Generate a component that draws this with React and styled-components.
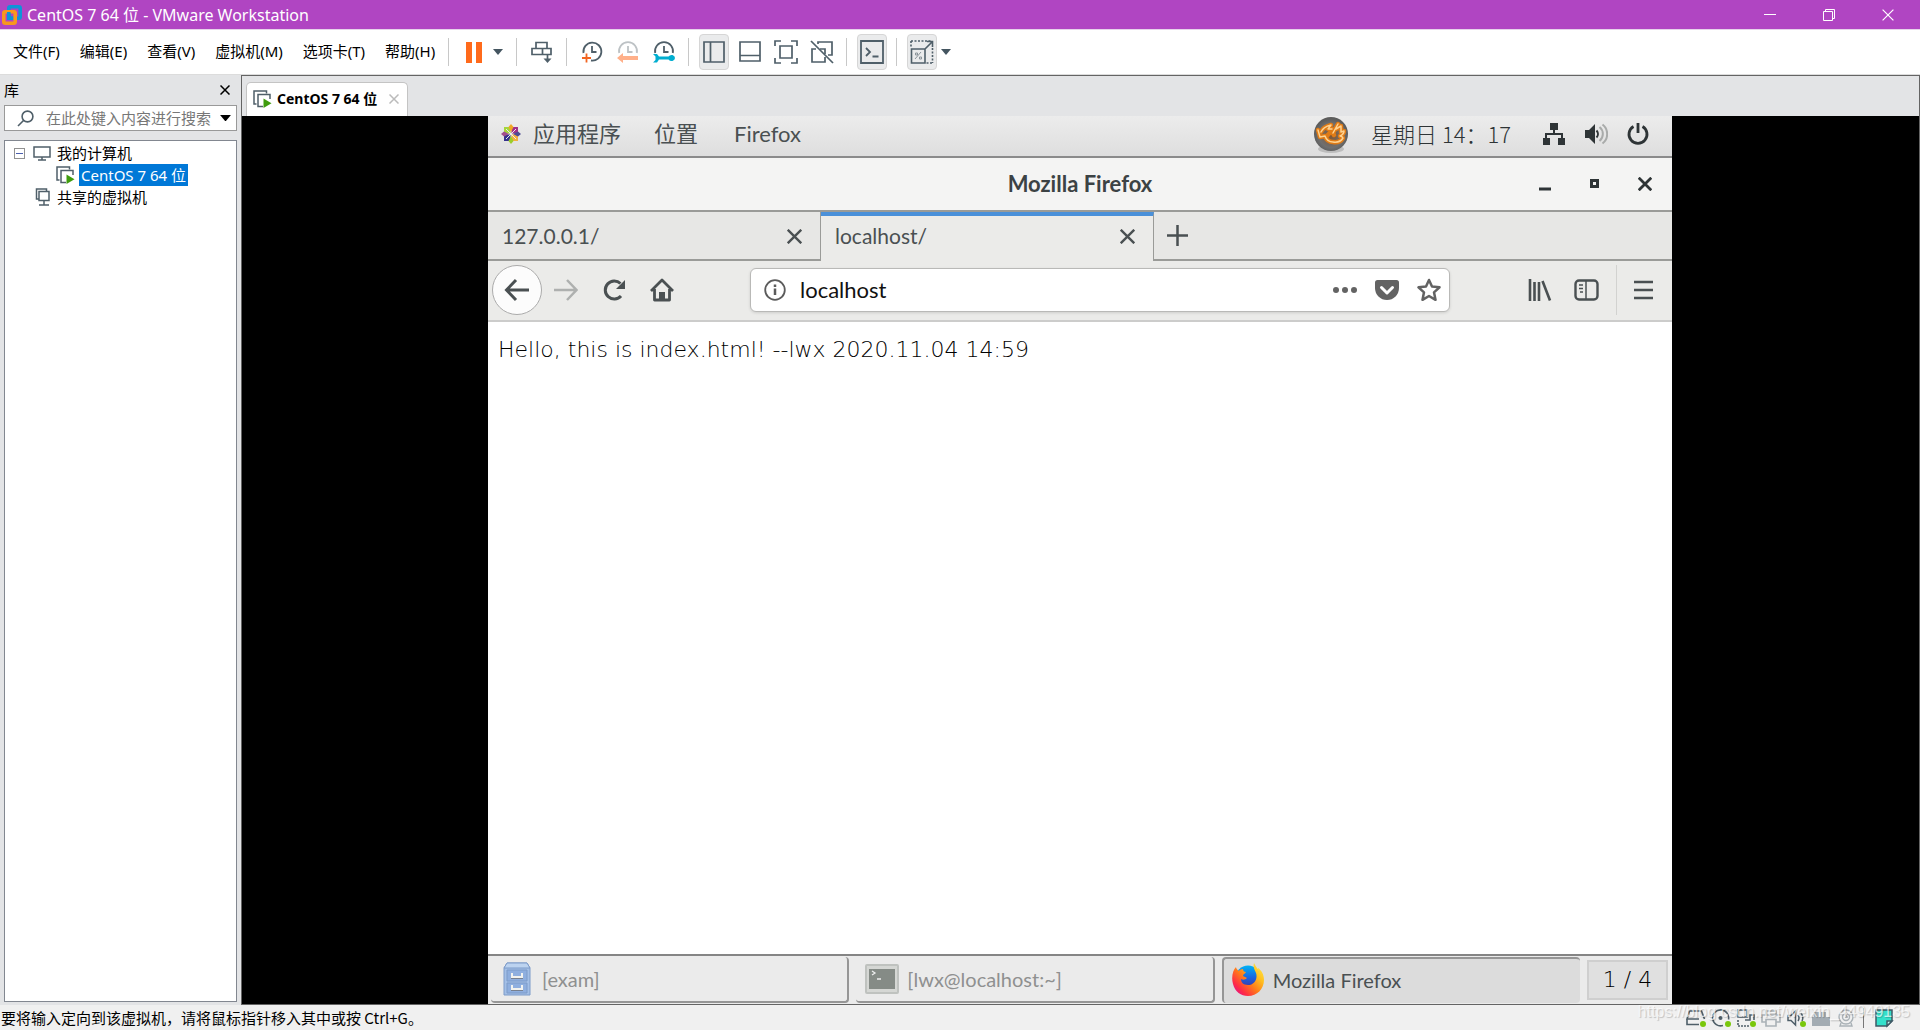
import React from 'react'
import styled, { createGlobalStyle, css } from 'styled-components'

const slate = '#4f5f69'
const guestInk = '#4a5052'
const guestDark = '#2e3436'
const guestLine = '#9a9b98'

const hostFont = '"Noto Sans", "Noto Sans CJK SC", sans-serif'
const guestFont = 'Lato, "Noto Sans CJK SC", sans-serif'
const thinFont = '"DejaVu Sans", "DejaVu Sans Light", "Noto Sans CJK SC", sans-serif'

const GlobalStyle = createGlobalStyle`
    * { box-sizing: border-box; }
    body { margin: 0; background: #e3e4e6; overflow: hidden; }
    button, input {
        font: inherit;
        color: inherit;
        border: 0;
        padding: 0;
        margin: 0;
        background: none;
        outline: none;
        line-height: inherit;
    }
    svg { display: block; flex: none; }
`

const Window = styled.div`
    display: flex;
    flex-direction: column;
    height: 100vh;
    font: 15px/22px ${hostFont};
    color: #000;
`

const IconButton = styled.button`
    display: flex;
    align-items: center;
    justify-content: center;
    flex: none;
`

/* ---------- host title bar ---------- */

const TitleBar = styled.header`
    display: flex;
    align-items: center;
    height: 30px;
    flex: none;
    padding: 0 3px 0 2px;
    gap: 5px;
    background: #b045c2;
    border-bottom: 1px solid #e6d3ea;
    color: #fff;
`

const WindowTitle = styled.h1`
    flex: 1;
    margin: 0;
    font-size: 16px;
    font-weight: 400;
    line-height: 28px;
`

const CaptionButtons = styled.div`
    display: flex;
`

const CaptionButton = styled(IconButton)`
    width: 59px;
    height: 28px;
`

/* ---------- menu and tool bar ---------- */

const MenuBar = styled.div`
    display: flex;
    align-items: center;
    height: 45px;
    flex: none;
    padding-left: 3px;
    background: #fff;
    border-bottom: 1px solid #dcdcdc;
`

const Menus = styled.nav`
    display: flex;
    padding-bottom: 3px;
`

const MenuItem = styled.button`
    padding: 0 10px;
    font-size: 15px;
    white-space: nowrap;
`

const Tools = styled.div`
    display: flex;
    align-items: center;
    gap: 6px;
`

const Separator = styled.span`
    width: 1px;
    height: 28px;
    margin: 0 4px 0 3px;
    background: #c8c8c8;
`

const Split = styled.div`
    display: flex;
`

const Tool = styled(IconButton)`
    width: 30px;
    height: 36px;
    border-radius: 4px;
    ${({ $pressed }) => $pressed && css`
        background: #eaebec;
        border: 1px solid #d6d6d6;
    `}
`

const CaretTool = styled(IconButton)`
    width: 18px;
    height: 36px;
`

/* ---------- library panel ---------- */

const Body = styled.div`
    display: flex;
    flex: 1;
    min-height: 0;
`

const Library = styled.aside`
    display: flex;
    flex-direction: column;
    width: 241px;
    flex: none;
    padding: 0 4px 3px;
    font-family: "Noto Sans CJK SC", sans-serif;
`

const LibraryHeader = styled.div`
    display: flex;
    justify-content: space-between;
    align-items: center;
    height: 30px;
    padding-right: 7px;
`

const LibraryTitle = styled.h2`
    margin: 0;
    font-size: 15px;
    font-weight: 400;
`

const SearchBox = styled.label`
    display: flex;
    align-items: center;
    height: 26px;
    padding: 0 5px 0 12px;
    gap: 8px;
    background: #fff;
    border: 1px solid #999;
`

const SearchInput = styled.input`
    flex: 1;
    min-width: 0;
    padding-left: 4px;
    font-size: 15px;
    &::placeholder { color: #777; opacity: 1; }
`

const Tree = styled.ul`
    flex: 1;
    margin: 0;
    margin-top: 9px;
    padding: 1px 0;
    list-style: none;
    background: #fff;
    border: 1px solid #828790;
`

const TreeRow = styled.li`
    display: flex;
    align-items: center;
    height: 22px;
    gap: 4px;
    padding-left: ${({ $indent }) => $indent}px;
`

const TreeLabel = styled.span`
    padding: 0 2px;
    ${({ $selected }) => $selected && css`
        font-family: ${hostFont};
        background: #0078d7;
        color: #fff;
    `}
`

const Expander = styled(IconButton)`
    width: 11px;
    height: 11px;
    margin-right: 4px;
    border: 1px solid #919191;
`

/* ---------- virtual machine area ---------- */

const Workspace = styled.main`
    display: flex;
    flex-direction: column;
    flex: 1;
    min-width: 0;
    border: 1px solid #646464;
`

const VmTabs = styled.div`
    display: flex;
    align-items: flex-end;
    height: 40px;
    flex: none;
    padding-left: 4px;
`

const VmTab = styled.div`
    display: flex;
    align-items: center;
    height: 34px;
    padding: 0 8px 2px 6px;
    background: #fff;
    border: 1px solid #c4c4c4;
    border-bottom: 0;
    border-radius: 5px 5px 0 0;
`

const VmTabLabel = styled.button`
    display: flex;
    align-items: center;
    gap: 5px;
    margin-right: 12px;
    font-size: 14px;
    font-weight: 700;
    white-space: nowrap;
`

const Stage = styled.div`
    display: flex;
    justify-content: center;
    flex: 1;
    min-height: 0;
    padding-left: 2px;
    padding-right: 3px;
    background: #000;
`

const Guest = styled.div`
    display: flex;
    flex-direction: column;
    height: 100%;
    aspect-ratio: 4 / 3;
    background: #fff;
    font: 22px/26px ${guestFont};
    color: ${guestInk};
`

const TopPanel = styled.div`
    display: flex;
    align-items: center;
    height: 42px;
    flex: none;
    padding: 0 22px 4px 13px;
    background: linear-gradient(#ececec, #dedede);
    border-bottom: 2px solid #8b8b8b;
    color: ${guestDark};
`

const PanelMenu = styled.button`
    display: flex;
    align-items: center;
    gap: 12px;
    margin-right: ${({ $gap }) => $gap}px;
    color: ${guestInk};
`

const PanelStatus = styled.div`
    display: flex;
    align-items: center;
    gap: 18px;
    margin-left: auto;
`

const Clock = styled.time`
    margin-left: 4px;
    margin-right: 13px;
    padding-bottom: 2px;
    font-family: "Noto Sans CJK SC", sans-serif;
    font-weight: 300;
    white-space: nowrap;
`

const GuestTitleBar = styled.div`
    display: grid;
    grid-template-columns: 1fr auto 1fr;
    align-items: center;
    height: 54px;
    flex: none;
    padding: 0 20px;
    background: #f4f4f3;
    border-bottom: 2px solid ${guestLine};
`

const GuestTitle = styled.h2`
    grid-column: 2;
    margin: 0;
    font-size: 22px;
    font-weight: 700;
    color: #3c4244;
`

const GuestCaption = styled.div`
    display: flex;
    justify-content: flex-end;
    gap: 36px;
    color: ${guestDark};
`

const BrowserTabs = styled.div`
    display: flex;
    height: 49px;
    flex: none;
    background: #e7e7e5;
    font-size: 21px;
`

const BrowserTab = styled.div`
    display: flex;
    align-items: center;
    justify-content: space-between;
    flex: 0 1 333px;
    padding: 1px 18px 0 14px;
    border: solid ${guestLine};
    border-width: 0 1px 2px 0;
    ${({ $active }) => $active && css`
        background: #ebebe9;
        border-top: 4px solid #4a90d9;
        border-bottom: 0;
        padding-top: 0;
        padding-bottom: 5px;
    `}
`

const NewTab = styled.div`
    display: flex;
    align-items: center;
    flex: 1;
    padding-left: 13px;
    border-bottom: 2px solid ${guestLine};
`

const NavBar = styled.div`
    display: flex;
    align-items: center;
    height: 61px;
    flex: none;
    padding: 0 19px 1px 4px;
    background: #ebebe9;
    border-bottom: 2px solid #cccccb;
`

const NavGroup = styled.div`
    display: flex;
    align-items: center;
    gap: ${({ $gap }) => $gap || 24}px;
`

const BackButton = styled(IconButton)`
    width: 50px;
    height: 50px;
    margin-right: -12px;
    background: #fcfcfc;
    border: 1px solid #ababab;
    border-radius: 50%;
`

const AddressBar = styled.label`
    display: flex;
    align-items: center;
    flex: 1;
    height: 44px;
    margin: 0 78px 0 76px;
    padding: 0 8px 0 13px;
    gap: 14px;
    background: #fff;
    border: 1px solid #b9b9b7;
    border-radius: 6px;
    box-shadow: 0 1px 3px rgba(0, 0, 0, 0.12);
`

const AddressInput = styled.input`
    flex: 1;
    min-width: 0;
    color: #111;
`

const NavDivider = styled.span`
    width: 1px;
    height: 50px;
    background: #d2d2d0;
`

const Page = styled.article`
    flex: 1;
    min-height: 0;
    padding: 14px 10px;
    font-family: ${thinFont};
    font-weight: 200;
    line-height: 28px;
    color: #000;
`

const PageText = styled.p`
    margin: 0;
`

const TaskBar = styled.div`
    display: flex;
    align-items: stretch;
    height: 50px;
    flex: none;
    gap: 7px;
    padding: 1px 4px 1px 3px;
    background: #ebebeb;
    border-top: 2px solid #858585;
`

const Task = styled.button`
    display: flex;
    align-items: center;
    flex: 1;
    gap: 8px;
    padding: 0 9px;
    font-size: 20px;
    border: solid #969696;
    border-width: 0 2px 2px 0;
    border-radius: 4px;
    color: #8f9090;
    ${({ $active }) => $active && css`
        background: #dcdcdc;
        border-width: 2px 0 0 2px;
        padding: 0 11px 3px 7px;
        color: ${guestInk};
    `}
`

const TaskIcon = styled.span`
    display: flex;
    justify-content: center;
    width: 34px;
`

const Workspaces = styled.button`
    align-self: center;
    width: 81px;
    height: 40px;
    background: #e0e0e0;
    border: 2px solid #cfcfcf;
    font-family: ${thinFont};
    font-weight: 200;
    color: #000;
`

/* ---------- host status bar ---------- */

const StatusBar = styled.footer`
    position: relative;
    display: flex;
    align-items: center;
    justify-content: space-between;
    height: 25px;
    flex: none;
    padding: 0 26px 0 1px;
    background: #f0f0f0;
    font-family: "Noto Sans CJK SC", sans-serif;
`

const Devices = styled.div`
    display: flex;
    align-items: center;
    gap: 5px;
`

const StatusDivider = styled.span`
    width: 1px;
    height: 20px;
    margin: 0 5px 0 2px;
    background: #777;
`

const Watermark = styled.span`
    position: absolute;
    right: 10px;
    bottom: 8px;
    font: 16px/20px "Liberation Sans", sans-serif;
    color: rgba(255, 255, 255, 0.7);
    text-shadow: 1px 1px 1px rgba(0, 0, 0, 0.2);
    pointer-events: none;
`

/* ---------- drawings ---------- */

const Icon = ({ w = 22, h = w, box, color = slate, sw = 2, children }) => (
  <svg width={w} height={h} viewBox={box || `0 0 ${w} ${h}`} fill="none" stroke={color} strokeWidth={sw} aria-hidden="true">
    {children}
  </svg>
)

const Caret = ({ w = 10, color = '#445560' }) => (
  <svg width={w} height={w / 2 + 1} viewBox="0 0 10 6" aria-hidden="true"><path d="M0 0h10L5 6z" fill={color} /></svg>
)

const Cross = ({ size = 10, sw = 1, color = 'currentColor' }) => (
  <Icon w={size} box="0 0 10 10" sw={sw} color={color}><path d="M.5.5l9 9M9.5.5l-9 9" /></Icon>
)

const VmwareLogo = () => (
  <Icon w={20} sw={3.6} color="none">
    <rect x="6.8" y="1.8" width="11.4" height="11.4" rx="1.5" stroke="#0d95d8" />
    <rect x="1.8" y="6.8" width="11.4" height="11.4" rx="1.5" stroke="#f8981d" />
    <path d="M6.8 7V13.2H11" stroke="#0d95d8" />
  </Icon>
)

const VmIcon = () => (
  <Icon w={19} h={18} sw={1.5}>
    <path d="M3.5 14H1V1H13.5V3.5" />
    <path d="M10 16.5H5V4.5H17V9" />
    <path d="M10.5 8.5l8 4.8-8 4.7z" fill="#3f9c0d" stroke="none" />
  </Icon>
)

const MonitorIcon = () => (
  <Icon w={18} h={15} sw={1.5}><path d="M1 1h16v10H1zM9 11v3M5 14h8" /></Icon>
)

const SharedIcon = () => (
  <Icon w={16} h={18} sw={1.5}><path d="M3.500 11H1.500V1h10v2M4 3.500h10v9H4zM9 12.500v4M4 17h10" /></Icon>
)

const SearchIcon = () => (
  <Icon w={17} sw={1.6}><circle cx="10.500" cy="6.500" r="5.400" /><path d="M6.500 10.500L1 16" /></Icon>
)

const PauseIcon = () => (
  <svg width="17" height="21" aria-hidden="true"><path d="M0 0h6v21H0zM10 0h6v21h-6z" fill="#ff6a1b" /></svg>
)

const SendIcon = () => (
  <Icon w={22} sw={1.7}>
    <path d="M5 7V1.500h11V7M1 7.500h19v6H1zM11.500 7.500v6M16.500 13.500v6" />
    <path d="M12.500 17.500h8l-4 4.500z" fill={slate} stroke="none" />
  </Icon>
)

const ClockFace = ({ light }) => (
  <g stroke={light ? '#bdc2c5' : slate}>
    <path d="M2.200 12A9 9 0 1 1 19.800 12" strokeWidth="1.800" />
    <path d="M11 5v6h4.500" strokeWidth="1.800" />
  </g>
)

const SnapshotIcon = () => (
  <Icon w={22} sw={1.8}>
    <path d="M2.500 12A9 9 0 1 1 10 19.500M11 5v6h4.500" />
    <path d="M5.500 12.500v9M1 17h9" stroke="#f26522" />
  </Icon>
)

const RevertIcon = () => (
  <Icon w={22} sw={1.8}>
    <ClockFace light />
    <path d="M0 17l6-5v3h15v4H6v3z" fill="#ffb08a" stroke="none" />
  </Icon>
)

// wrench laid under the clock: open jaw on the left, closed ring on the right
const ManageIcon = () => (
  <Icon w={22} sw={1.8}>
    <ClockFace />
    <path d="M0 13h4l2 2.500h9.500Q17 13.500 19.500 14q2.500 1 2.500 3t-2.500 3q-2.500.5-4-1.500H6L4 21.500H0L2.500 19v-3.500z" fill="#00aed0" stroke="none" />
  </Icon>
)

const SideIcon = () => <Icon w={22} sw={1.7}><path d="M1 1h20v20H1zM7.500 1v20" /></Icon>
const BottomIcon = () => <Icon w={22} sw={1.7}><path d="M1 1h20v19H1zM1 14.500h20" /></Icon>
const FullscreenIcon = () => (
  <Icon w={24} sw={1.7}><path d="M1 6V1h6M17 1h6v5M23 18v5h-6M7 23H1v-5M6 6h12v12H6z" /></Icon>
)
const UnityIcon = () => (
  <Icon w={24} sw={1.7}>
    <path d="M8 4V2h14v13h-4M6 9H2v13h13v-5M10 9h5v5" />
    <path d="M1 1l22 22" />
  </Icon>
)
const ConsoleIcon = () => (
  <Icon w={24} sw={1.8}><path d="M1 1h22v22H1zM6 8l4 4-4 4M12.500 16.500h6" /></Icon>
)
const StretchIcon = () => (
  <Icon w={24} sw={1.6}>
    <path d="M1 1h21M22.500 8v15M22 23h-6M1 1v7" strokeDasharray="2 1.500" />
    <path d="M1.500 9H15v14H1.500zM15 9l7-7M17 1.500h5.500V7" />
    <path d="M5 19l6-7M5.500 13h2v2h-2zM9.500 17h2v2h-2z" strokeWidth="1" stroke="#8b949a" />
  </Icon>
)

const CentosIcon = () => (
  <svg width="20" height="20" viewBox="0 0 20 20" aria-hidden="true">
    <path d="M3 3h6.500v6.500H3z" fill="#a5d63c" />
    <path d="M10.500 3H17v6.500h-6.500z" fill="#a0308a" />
    <path d="M3 10.500h6.500V17H3z" fill="#35328c" />
    <path d="M10.500 10.500H17V17h-6.500z" fill="#f2b040" />
    <path d="M10 0l2.500 3-2.500 5-2.500-5z" fill="#efa724" />
    <path d="M20 10l-3 2.500-5-2.500 5-2.500z" fill="#4d4a94" />
    <path d="M10 20l-2.500-3 2.500-5 2.500 5z" fill="#9ccd2a" />
    <path d="M0 10l3-2.500 5 2.500-5 2.500z" fill="#a14f8c" />
    <path d="M5 5l10 10M15 5L5 15" stroke="#ececec" strokeWidth="1" />
  </svg>
)

const InputMethodIcon = () => (
  <svg width="36" height="38" viewBox="0 0 36 38" aria-hidden="true">
    <defs>
      <radialGradient id="orb" cx="50%" cy="55%">
        <stop offset="0" stopColor="#83552f" />
        <stop offset=".7" stopColor="#707070" />
        <stop offset="1" stopColor="#5c5c5c" />
      </radialGradient>
    </defs>
    <ellipse cx="18" cy="34" rx="13" ry="4" fill="#bdbdbd" />
    <circle cx="18" cy="19" r="17" fill="url(#orb)" />
    <g fill="none" strokeLinejoin="round" strokeLinecap="round">
      <path d="M5 15l2 7 5-1q2 6 8 6 7 1 10-4-1-2-3-2 4-2 4-5l-3 1V11l-5 3M8 17q2-5 10-7l-3 4h4M14 21q4-6 7-1M25 9l-5 9" stroke="#e07b16" strokeWidth="4.500" />
      <path d="M5 15l2 7 5-1q2 6 8 6 7 1 10-4-1-2-3-2 4-2 4-5l-3 1V11l-5 3M8 17q2-5 10-7l-3 4h4M25 9l-5 9" stroke="#ffd391" strokeWidth="1.500" />
    </g>
  </svg>
)

const NetworkIcon = () => (
  <svg width="24" height="24" viewBox="0 0 24 24" fill={guestDark} aria-hidden="true">
    <path d="M8 1h8v7H8zM1 16h7v7H1zM16 16h7v7h-7zM11 8h2v3h8v5h-2v-3H5v3H3v-5h8z" />
  </svg>
)

const VolumeIcon = () => (
  <Icon w={24} sw={2} color={guestDark}>
    <path d="M1 8h4l6-6v20l-6-6H1z" fill={guestDark} stroke="none" />
    <path d="M12.500 8.500a5 5 0 0 1 0 7" />
    <path d="M15.500 5a9 9 0 0 1 0 14M18.500 2.500a12 12 0 0 1 0 19" stroke="#a9abaa" />
  </Icon>
)

const PowerIcon = () => (
  <Icon w={24} sw={2.800} color={guestDark}><path d="M7.500 4.500a9 9 0 1 0 9 0M12 1v10" /></Icon>
)

const BackIcon = () => <Icon w={26} sw={3} color={guestInk}><path d="M25 13H3M12 3L2.500 13l9.500 10" /></Icon>
const ForwardIcon = () => <Icon w={24} sw={2.500} color="#aeb0af"><path d="M0 12h22M13 2l9.500 10L13 22" /></Icon>
const ReloadIcon = () => (
  <Icon w={24} sw={3} color={guestInk}>
    <path d="M19 18a9 9 0 1 1-.5-12.500" />
    <path d="M23 2v9h-9z" fill={guestInk} stroke="none" />
  </Icon>
)
const HomeIcon = () => (
  <Icon w={24} sw={2.800} color={guestInk}>
    <path d="M1 13L12 2l11 11M4.500 11v11h15V11" strokeLinejoin="round" />
    <path d="M9 14h6v8H9z" fill={guestInk} stroke="none" />
  </Icon>
)
const InfoIcon = () => (
  <Icon w={22} sw={1.800} color="#5b5b5b">
    <circle cx="11" cy="11" r="9.800" />
    <path d="M11 9.500V16M11 5.500v2.500" strokeWidth="2.500" />
  </Icon>
)
const DotsIcon = () => (
  <svg width="24" height="8" fill="#636363" aria-hidden="true"><circle cx="3" cy="4" r="3" /><circle cx="12" cy="4" r="3" /><circle cx="21" cy="4" r="3" /></svg>
)
const PocketIcon = () => (
  <Icon w={24} h={22} sw={3} color="#fff">
    <path d="M2.500 1h19q2.500 0 2.500 2.500V9a12 12 0 0 1-24 0V3.500Q0 1 2.500 1z" fill="#636363" stroke="none" />
    <path d="M6.500 8.500l5.500 5.500 5.500-5.500" strokeLinecap="round" strokeLinejoin="round" />
  </Icon>
)
const StarIcon = () => (
  <Icon w={24} sw={2.500} color="#636363">
    <path d="M12 2l3 6.500 7.500.8-5.500 5 1.500 7.500L12 18l-6.500 3.800L7 14.300l-5.500-5L9 8.500z" strokeLinejoin="round" />
  </Icon>
)
const LibraryIcon = () => (
  <Icon w={24} h={22} sw={2.600} color={guestInk}><path d="M2 0v22M6.500 3v19M11 3v19M14.500 2l7.500 19.500" /></Icon>
)
const SidebarIcon = () => (
  <Icon w={25} h={22} sw={2.400} color={guestInk}>
    <rect x="1.500" y="1.500" width="22" height="19" rx="3.500" />
    <path d="M12 1v20" strokeWidth="1.500" />
    <path d="M5 6h4M5 9.500h4M6 13h3" strokeWidth="1.500" />
  </Icon>
)
const MenuIcon = () => <Icon w={19} h={20} sw={2.600} color={guestInk}><path d="M0 2h19M0 10h19M0 18h19" /></Icon>

const CabinetIcon = () => (
  <Icon w={28} h={34} sw={1} color="#7d9bc9">
    <path d="M4 1h20l3 5v27H1V6z" fill="#a3bfe6" />
    <path d="M1 6h26L24 1H4z" fill="#bcd3f0" />
    <path d="M4 8h20v11H4zM4 21h20v10H4z" fill="#8fafdf" />
    <path d="M9 11v4h10v-4M9 23v4h10v-4" stroke="#f2f2ee" strokeWidth="2" />
    <path d="M8 16.500h12M8 28.500h12" stroke="#77808f" />
  </Icon>
)
const TerminalIcon = () => (
  <Icon w={34} h={30} sw={2} color="#bfc2bf">
    <rect x="1" y="1" width="32" height="28" rx="1" fill="#d5d7d4" />
    <path d="M4 5h26v20H4z" fill="#858b86" stroke="none" />
    <path d="M7 7l3 2-3 2M12 15h4" stroke="#eee" strokeWidth="1.300" />
  </Icon>
)
const FirefoxIcon = () => (
  <svg width="32" height="34" viewBox="0 0 32 34" aria-hidden="true">
    <defs>
      <linearGradient id="fox" x1="1" y1="0" x2="0.100" y2="0.900">
        <stop offset="0" stopColor="#fff44f" />
        <stop offset=".35" stopColor="#ffbd1f" />
        <stop offset=".6" stopColor="#ff7a1a" />
        <stop offset=".85" stopColor="#ff2b45" />
        <stop offset="1" stopColor="#e31587" />
      </linearGradient>
      <linearGradient id="globe" x1="0" y1="0" x2="0" y2="1">
        <stop offset="0" stopColor="#00b3f4" />
        <stop offset=".5" stopColor="#1b62e0" />
        <stop offset="1" stopColor="#4b2a8c" />
      </linearGradient>
    </defs>
    <circle cx="16" cy="15" r="12.500" fill="url(#globe)" />
    <path d="M22 0c-1 4 0 6 2 10 2 6-2 12-8 12-5 0-7-3-7-6 2 1 4 1 6-1-1-1-3-1-4-2 0-2 2-2 3-4-2 0-3-1-3-3-2 0-4 1-4 2-2-1-3-3-3-4C1 7-1 14 1 21c2 8 8 12 15 12 9 0 16-7 16-16 0-6-3-10-6-12 0 2 1 3 1 4-1-4-4-6-5-9z" fill="url(#fox)" />
  </svg>
)

const Led = () => <circle cx="17" cy="16" r="3" fill="#7ac70c" stroke="none" />
const DiskIcon = () => <Icon w={20} sw={1.600}><path d="M3.500 3h12l3 8M3.500 3L1 11h12M1 11v5.500h12" /><Led /></Icon>
const DiscIcon = () => <Icon w={20} sw={1.600}><path d="M12 17.500a8 8 0 1 1 5.500-6" /><circle cx="9.500" cy="10" r="2" fill={slate} stroke="none" /><Led /></Icon>
const AdapterIcon = () => <Icon w={20} sw={1.600}><path d="M2 2h9v7H2zM9 12h5V7h4v5" /><path d="M2 12v6h11" strokeDasharray="2 1" /><Led /></Icon>
const PrinterIcon = () => <Icon w={20} sw={1.600} color="#a9b1b6"><path d="M5 7V3h10v4M5 14H1V7h18v7h-4M5 11.500h10V18H5z" /></Icon>
const SpeakerIcon = () => <Icon w={20} sw={1.500}><path d="M2 7.500h3L9.500 3v14L5 12.500H2zM12 7q2 3 0 6M15 5q3 4 1 8" /><Led /></Icon>
const CardIcon = () => <svg width="20" height="20" fill="#a3acb3" aria-hidden="true"><path d="M1 9h18v9H1zM3 4h5v5H3zM10 4h5v5h-5z" /></svg>
const CameraIcon = () => <Icon w={20} sw={1.400} color="#a9b1b6"><circle cx="10" cy="9" r="7" /><circle cx="10" cy="9" r="3.500" /><path d="M5 15l-1 3h12l-1-3M10 7v2h2" /></Icon>
const NoteIcon = () => <Icon w={20} sw={1.500} color="#3e5a66"><path d="M2 2h16v11l-5 5H2z" fill="#34e0cb" /><path d="M18 13h-5v5z" fill="#bff5ee" /></Icon>

/* ---------- screen ---------- */

const menus = ['文件(F)', '编辑(E)', '查看(V)', '虚拟机(M)', '选项卡(T)', '帮助(H)']

const devices = [
  ['硬盘', DiskIcon],
  ['CD/DVD', DiscIcon],
  ['网络适配器', AdapterIcon],
  ['打印机', PrinterIcon],
  ['声卡', SpeakerIcon],
  ['USB', CardIcon],
  ['摄像头', CameraIcon],
]

const HostTitleBar = () => (
  <TitleBar>
    <VmwareLogo />
    <WindowTitle>CentOS 7 64 位 - VMware Workstation</WindowTitle>
    <CaptionButtons>
      <CaptionButton aria-label="最小化"><Icon w={12} sw={1} color="#fff"><path d="M0 5.500h12" /></Icon></CaptionButton>
      <CaptionButton aria-label="还原"><Icon w={12} sw={1} color="#fff"><path d="M.5 2.500h9v9h-9zM2.500 2.500v-2h9v9h-2" /></Icon></CaptionButton>
      <CaptionButton aria-label="关闭"><Cross size={12} /></CaptionButton>
    </CaptionButtons>
  </TitleBar>
)

const HostMenuBar = () => (
  <MenuBar>
    <Menus>
      {menus.map((name) => <MenuItem key={name}>{name}</MenuItem>)}
    </Menus>
    <Tools>
      <Separator />
      <Split>
        <Tool aria-label="挂起"><PauseIcon /></Tool>
        <CaretTool aria-label="电源"><Caret /></CaretTool>
      </Split>
      <Separator />
      <Tool aria-label="发送 Ctrl+Alt+Del"><SendIcon /></Tool>
      <Separator />
      <Tool aria-label="拍摄快照"><SnapshotIcon /></Tool>
      <Tool aria-label="恢复快照"><RevertIcon /></Tool>
      <Tool aria-label="管理快照"><ManageIcon /></Tool>
      <Separator />
      <Tool $pressed aria-label="显示库"><SideIcon /></Tool>
      <Tool aria-label="缩略图栏"><BottomIcon /></Tool>
      <Tool aria-label="全屏"><FullscreenIcon /></Tool>
      <Tool aria-label="Unity"><UnityIcon /></Tool>
      <Separator />
      <Tool $pressed aria-label="控制台视图"><ConsoleIcon /></Tool>
      <Separator />
      <Split>
        <Tool $pressed aria-label="自由拉伸"><StretchIcon /></Tool>
        <CaretTool aria-label="拉伸选项"><Caret /></CaretTool>
      </Split>
    </Tools>
  </MenuBar>
)

const LibraryPanel = () => (
  <Library>
    <LibraryHeader>
      <LibraryTitle>库</LibraryTitle>
      <IconButton aria-label="关闭库"><Cross sw={1.5} color="#000" /></IconButton>
    </LibraryHeader>
    <SearchBox>
      <SearchIcon />
      <SearchInput aria-label="搜索" placeholder="在此处键入内容进行搜索" />
      <Caret w={11} color="#000" />
    </SearchBox>
    <Tree>
      <TreeRow $indent={9}>
        <Expander aria-label="折叠"><Icon w={7} sw={1} color="#4a5fae"><path d="M0 3.500h7" /></Icon></Expander>
        <MonitorIcon />
        <TreeLabel>我的计算机</TreeLabel>
      </TreeRow>
      <TreeRow $indent={51}>
        <VmIcon />
        <TreeLabel $selected>CentOS 7 64 位</TreeLabel>
      </TreeRow>
      <TreeRow $indent={30}>
        <SharedIcon />
        <TreeLabel>共享的虚拟机</TreeLabel>
      </TreeRow>
    </Tree>
  </Library>
)

const GuestDesktop = () => (
  <Guest>
    <TopPanel>
      <PanelMenu $gap={33}><CentosIcon />应用程序</PanelMenu>
      <PanelMenu $gap={36}>位置</PanelMenu>
      <PanelMenu $gap={0}>Firefox</PanelMenu>
      <PanelStatus>
        <InputMethodIcon />
        <Clock>星期日 14：17</Clock>
        <NetworkIcon />
        <VolumeIcon />
        <PowerIcon />
      </PanelStatus>
    </TopPanel>
    <GuestTitleBar>
      <GuestTitle>Mozilla Firefox</GuestTitle>
      <GuestCaption>
        <IconButton aria-label="最小化"><Icon w={14} sw={3} color={guestDark}><path d="M1 12h12" /></Icon></IconButton>
        <IconButton aria-label="最大化"><Icon w={14} sw={3} color={guestDark}><path d="M3.500 3.500h6v6h-6z" /></Icon></IconButton>
        <IconButton aria-label="关闭"><Cross size={14} sw={2} /></IconButton>
      </GuestCaption>
    </GuestTitleBar>
    <BrowserTabs>
      <BrowserTab>
        <button>127.0.0.1/</button>
        <IconButton aria-label="关闭标签页"><Cross size={15} sw={1.600} /></IconButton>
      </BrowserTab>
      <BrowserTab $active>
        <button>localhost/</button>
        <IconButton aria-label="关闭标签页"><Cross size={15} sw={1.600} /></IconButton>
      </BrowserTab>
      <NewTab>
        <IconButton aria-label="新建标签页"><Icon w={21} sw={2.500} color={guestInk}><path d="M10.500 0v21M0 10.500h21" /></Icon></IconButton>
      </NewTab>
    </BrowserTabs>
    <NavBar>
      <NavGroup>
        <BackButton aria-label="后退"><BackIcon /></BackButton>
        <IconButton aria-label="前进"><ForwardIcon /></IconButton>
        <IconButton aria-label="刷新"><ReloadIcon /></IconButton>
        <IconButton aria-label="主页"><HomeIcon /></IconButton>
      </NavGroup>
      <AddressBar>
        <InfoIcon />
        <AddressInput aria-label="地址" defaultValue="localhost" />
        <NavGroup $gap={18}>
          <IconButton aria-label="更多"><DotsIcon /></IconButton>
          <IconButton aria-label="Pocket"><PocketIcon /></IconButton>
          <IconButton aria-label="收藏"><StarIcon /></IconButton>
        </NavGroup>
      </AddressBar>
      <NavGroup $gap={22}>
        <IconButton aria-label="书库"><LibraryIcon /></IconButton>
        <NavGroup $gap={17}>
          <IconButton aria-label="侧栏"><SidebarIcon /></IconButton>
          <NavDivider />
          <IconButton aria-label="菜单"><MenuIcon /></IconButton>
        </NavGroup>
      </NavGroup>
    </NavBar>
    <Page>
      <PageText>Hello, this is index.html! --lwx 2020.11.04 14:59</PageText>
    </Page>
    <TaskBar>
      <Task><TaskIcon><CabinetIcon /></TaskIcon>[exam]</Task>
      <Task><TaskIcon><TerminalIcon /></TaskIcon>[lwx@localhost:~]</Task>
      <Task $active><TaskIcon><FirefoxIcon /></TaskIcon>Mozilla Firefox</Task>
      <Workspaces>1 / 4</Workspaces>
    </TaskBar>
  </Guest>
)

const App = () => {
  return (
    <Window>
      <GlobalStyle />
      <HostTitleBar />
      <HostMenuBar />
      <Body>
        <LibraryPanel />
        <Workspace>
          <VmTabs>
            <VmTab>
              <VmTabLabel><VmIcon />CentOS 7 64 位</VmTabLabel>
              <IconButton aria-label="关闭选项卡"><Cross sw={1.500} color="#bbb" /></IconButton>
            </VmTab>
          </VmTabs>
          <Stage>
            <GuestDesktop />
          </Stage>
        </Workspace>
      </Body>
      <StatusBar>
        <span>要将输入定向到该虚拟机，请将鼠标指针移入其中或按 Ctrl+G。</span>
        <Devices>
          {devices.map(([label, Drawing]) => (
            <IconButton key={label} aria-label={label}><Drawing /></IconButton>
          ))}
          <StatusDivider />
          <IconButton aria-label="消息日志"><NoteIcon /></IconButton>
        </Devices>
        <Watermark>https://blog.csdn.net/weixin_44949135</Watermark>
      </StatusBar>
    </Window>
  )
}

export default App
